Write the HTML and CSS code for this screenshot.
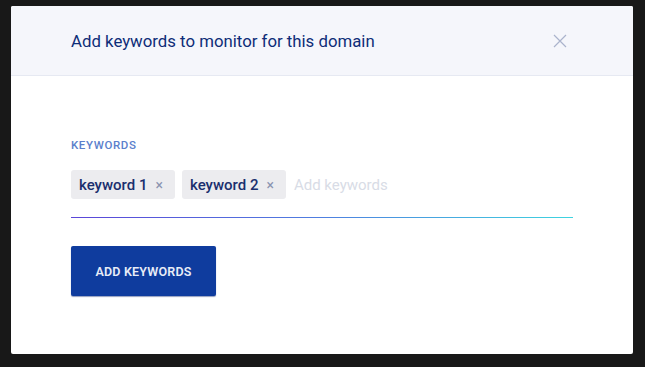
FILE: index.html
```html
<!DOCTYPE html>
<html>
<head>
<meta charset="utf-8">
<link rel="stylesheet" href="styles.css">
</head>
<body>
<div class="backdrop">
  <div class="modal">
    <div class="modal-header">
      <h2 class="modal-title">Add keywords to monitor for this domain</h2>
      <button class="close-btn" aria-label="Close">
        <svg width="14" height="14" viewBox="0 0 14 14"><path d="M1 1L13 13M13 1L1 13" stroke="#aab3cc" stroke-width="1.2" fill="none"/></svg>
      </button>
    </div>
    <div class="modal-body">
      <div class="field-label">KEYWORDS</div>
      <div class="tag-input">
        <span class="chip">keyword 1<span class="chip-x">×</span></span>
        <span class="chip">keyword 2<span class="chip-x">×</span></span>
        <span class="placeholder">Add keywords</span>
      </div>
      <div class="underline"></div>
      <button class="primary-btn">ADD KEYWORDS</button>
    </div>
  </div>
</div>
</body>
</html>
```
FILE: styles.css
```css
html, body {
  margin: 0;
  padding: 0;
}
body {
  background: #181818;
  font-family: Roboto, "Liberation Sans", sans-serif;
  width: 645px;
  height: 367px;
  overflow: hidden;
}
.backdrop {
  padding: 6px 12px 0 11px;
}
.modal {
  width: 622px;
  height: 348px;
  background: #ffffff;
  border-radius: 2px;
  overflow: hidden;
}
.modal-header {
  height: 69px;
  background: #f5f6fb;
  border-bottom: 1px solid #e6e9f2;
  display: flex;
  align-items: center;
  justify-content: space-between;
  padding: 0 60px 0 60px;
}
.modal-title {
  margin: 0;
  font-size: 16.8px;
  font-weight: 400;
  color: #0e2d78;
  padding-top: 1px;
}
.close-btn {
  background: none;
  border: 0;
  padding: 0;
  margin-right: 6px;
  display: flex;
}
.modal-body {
  padding: 63px 60px 0 60px;
}
.field-label {
  font-size: 11.5px;
  font-weight: 500;
  color: #5b80cc;
  letter-spacing: 0.6px;
  line-height: 13px;
}
.tag-input {
  display: flex;
  align-items: center;
  gap: 7px;
  margin-top: 18px;
}
.chip {
  display: inline-flex;
  align-items: center;
  height: 29px;
  padding: 0 12px 0 8px;
  background: #ececef;
  border-radius: 3px;
  font-size: 15px;
  font-weight: 500;
  color: #1a2f6e;
}
.chip-x {
  margin-left: 8px;
  color: #8a93b0;
  font-size: 14px;
  font-weight: 400;
}
.placeholder {
  margin-left: 1px;
  font-size: 15px;
  color: #d8dce6;
}
.underline {
  margin-top: 18px;
  width: 502px;
  height: 1px;
  background: linear-gradient(to right, #5b46d8, #4f7fe0, #3fd4e0);
}
.primary-btn {
  margin-top: 28px;
  width: 145px;
  height: 50px;
  background: #0f3c9e;
  color: #e8ecf7;
  border: 0;
  border-radius: 2px;
  font-family: Roboto, "Liberation Sans", sans-serif;
  font-size: 12.5px;
  font-weight: 600;
  letter-spacing: 0.2px;
  box-shadow: 0 1px 1px rgba(15, 40, 110, 0.45);
}
```
